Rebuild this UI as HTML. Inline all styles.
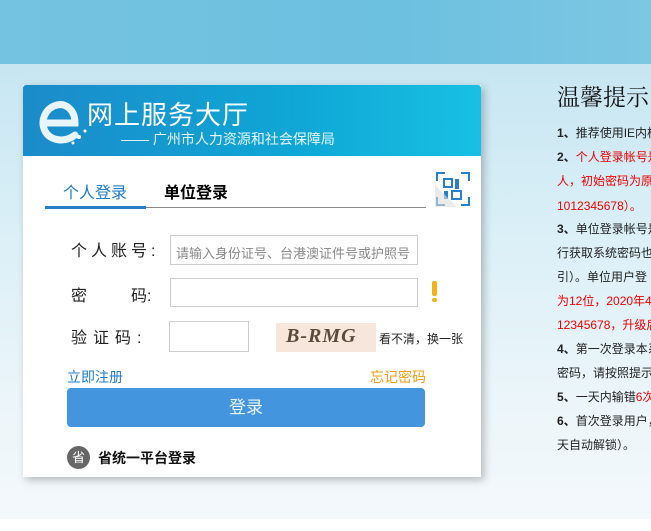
<!DOCTYPE html>
<html><head><meta charset="utf-8"><style>
*{margin:0;padding:0;box-sizing:border-box}
html{overflow:hidden;width:651px;height:531px}
body{width:651px;height:531px;overflow:hidden;position:relative;font-family:"Liberation Sans","Noto Sans CJK SC",sans-serif;background:#fff}
.sky{position:absolute;left:0;top:0;width:651px;height:64px;background:linear-gradient(90deg,#74c3e0,#6cc0e0 60%,#7cc7e2)}
.mid{position:absolute;left:0;top:64px;width:651px;height:455px;background:linear-gradient(180deg,#c7e6f2 0,#dcf0f7 40%,#eef6fa 80%,#f3f8fb)}
.card{position:absolute;left:23px;top:85px;width:458px;height:392px;background:#fff;box-shadow:3px 3px 8px rgba(0,0,0,.25)}
.hd{position:absolute;left:0;top:0;width:458px;height:71px;background:linear-gradient(90deg,#1b8bc9,#0fa7d6 60%,#18c0e3);border-radius:3px 3px 0 0}
.t1{position:absolute;left:64px;top:10px;color:#fff;font-size:26px;letter-spacing:1px}
.t2{position:absolute;left:98px;top:44px;color:#e6f6fc;font-size:14px}
.abs{position:absolute}
.wrap{position:absolute;left:0;top:0;width:651px;height:531px;overflow:hidden}
.tip{position:absolute;left:557px;font-size:12px;white-space:nowrap;color:#222}
.tip b{font-weight:bold}
.r{color:#e00}
input{position:absolute;border:1px solid #ccc;background:#fff}
.lab{position:absolute;font-size:16px;color:#222}
</style></head><body>
<div class="wrap">
<div class="sky"></div><div class="mid"></div>
<div class="card">
 <div class="hd">
  <svg class="abs" style="left:12px;top:8px" width="56" height="56" viewBox="0 0 56 56"><path d="M10 30 H40 C40 16 30 10 22 12 C10 15 5 28 10 38 C15 48 30 50 40 42" fill="none" stroke="#e8f6fc" stroke-width="7" stroke-linecap="round"/><circle cx="44" cy="44" r="2" fill="#fff"/><circle cx="50" cy="38" r="1.5" fill="#fff"/><circle cx="38" cy="50" r="1.5" fill="#fff"/></svg>
  <div class="t1">网上服务大厅</div>
  <div class="t2">—— 广州市人力资源和社会保障局</div>
 </div>
 <div class="abs" style="left:40px;top:94px;font-size:16px;color:#1f7cc7">个人登录</div>
 <div class="abs" style="left:141px;top:94px;font-size:16px;color:#000;font-weight:bold">单位登录</div>
 <div class="abs" style="left:22px;top:122px;width:381px;height:1px;background:#888"></div>
 <div class="abs" style="left:22px;top:121px;width:101px;height:3px;background:#2a7fc8"></div>
 <svg class="abs" style="left:412px;top:86px" width="36" height="36" viewBox="0 0 36 36"><path d="M2 10V2h8M26 2h8v8M34 26v8h-8M10 34H2v-8" fill="none" stroke="#2a7fc8" stroke-width="2"/><rect x="9" y="8" width="8" height="8" fill="none" stroke="#2a7fc8" stroke-width="2"/><rect x="20" y="8" width="4" height="10" fill="#2a7fc8"/><rect x="9" y="20" width="4" height="8" fill="#2a7fc8"/><rect x="17" y="20" width="9" height="8" fill="none" stroke="#2a7fc8" stroke-width="2"/><path d="M0 14 L22 36 H0Z" fill="#ddd" opacity=".6"/></svg>
 <div class="lab" style="left:48px;top:152px;letter-spacing:4px">个人账号:</div>
 <input style="left:147px;top:150px;width:248px;height:30px">
 <div class="abs" style="left:153px;top:158px;font-size:13px;color:#888">请输入身份证号、台港澳证件号或护照号</div>
 <div class="lab" style="left:48px;top:197px">密</div><div class="lab" style="left:108px;top:197px">码:</div>
 <input style="left:147px;top:193px;width:248px;height:29px">
 <div class="abs" style="left:409px;top:196px;width:5px;height:15px;background:#f2b21c;border-radius:2px"></div>
 <div class="abs" style="left:409px;top:213px;width:5px;height:4px;background:#f2b21c;border-radius:2px"></div>
 <div class="lab" style="left:48px;top:239px;letter-spacing:6px">验证码:</div>
 <input style="left:146px;top:236px;width:80px;height:31px">
 <div class="abs" style="left:253px;top:238px;width:100px;height:29px;background:#f6e6dc;font:bold 20px 'Liberation Serif',serif;color:#5a4a3a;padding:2px 10px;letter-spacing:1px;font-style:italic">B-RMG</div>
 <div class="abs" style="left:356px;top:245px;font-size:12px;color:#222">看不清，换一张</div>
 <div class="abs" style="left:44px;top:282px;font-size:14px;color:#1f7cc7">立即注册</div>
 <div class="abs" style="left:347px;top:282px;font-size:14px;color:#f39a14">忘记密码</div>
 <div class="abs" style="left:44px;top:303px;width:358px;height:39px;background:#4396dd;border-radius:4px;color:#eaf4fc;font-size:17px;text-align:center;line-height:39px">登录</div>
 <div class="abs" style="left:44px;top:361px;width:23px;height:23px;border-radius:50%;background:#666;color:#fff;font-size:13px;text-align:center;line-height:23px">省</div>
 <div class="abs" style="left:75px;top:363px;font-size:14px;font-weight:bold;color:#111">省统一平台登录</div>
</div>
<div class="abs" style="left:557px;top:79px;font-size:23px;color:#111;font-family:'Liberation Serif','Noto Serif CJK SC',serif;white-space:nowrap">温馨提示</div>
<div class="tip" style="top:124px"><b>1、</b>推荐使用IE内核浏览器</div>
<div class="tip r" style="top:148px"><b style="color:#222">2、</b>个人登录帐号是身份证号</div>
<div class="tip r" style="top:172px">人，初始密码为原密码</div>
<div class="tip r" style="top:197px">1012345678）。</div>
<div class="tip" style="top:220px"><b>3、</b>单位登录帐号是</div>
<div class="tip" style="top:244px">行获取系统密码也</div>
<div class="tip" style="top:268px">引）。单位用户登</div>
<div class="tip r" style="top:292px">为12位，2020年4月</div>
<div class="tip r" style="top:316px">12345678，升级后</div>
<div class="tip" style="top:340px"><b>4、</b>第一次登录本系统</div>
<div class="tip" style="top:364px">密码，请按照提示</div>
<div class="tip" style="top:388px"><b>5、</b>一天内输错<span class="r">6次</span></div>
<div class="tip" style="top:412px"><b>6、</b>首次登录用户，</div>
<div class="tip" style="top:436px">天自动解锁）。</div>
</div>
</body></html>
